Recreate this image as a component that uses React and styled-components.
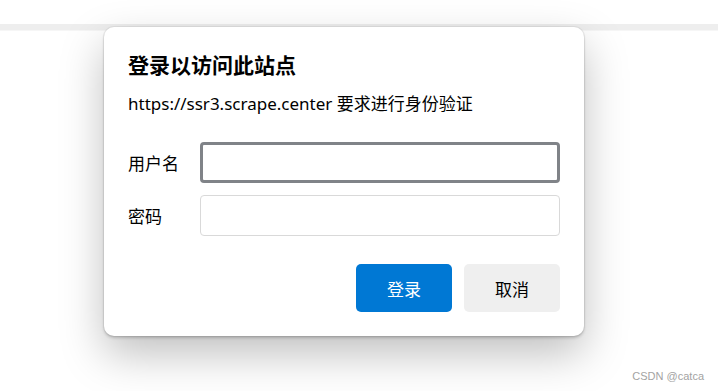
import { createGlobalStyle, styled } from 'styled-components';

const GlobalStyle = createGlobalStyle`
	html, body {
		margin: 0;
		padding: 0;
		background: #ffffff;
	}
	body {
		font-family: 'Noto Sans', 'Noto Sans CJK SC', sans-serif;
		color: #000;
	}
`;

const App = () => {
	return (
		<>
			<GlobalStyle />
			<Page>
				<TopStrip />
				<Watermark>CSDN @catca</Watermark>
			</Page>
			<Overlay>
				<Dialog>
					<Title>登录以访问此站点</Title>
					<Subtitle>https://ssr3.scrape.center 要求进行身份验证</Subtitle>
					<Form>
						<Label htmlFor='user'>用户名</Label>
						<Input id='user' $focused />
						<Label htmlFor='pass'>密码</Label>
						<Input id='pass' type='password' />
					</Form>
					<Actions>
						<Button $primary>登录</Button>
						<Button>取消</Button>
					</Actions>
				</Dialog>
			</Overlay>
		</>
	);
};

const Page = styled.div`
	position: relative;
	height: 391px;
	display: flex;
	flex-direction: column;
	justify-content: space-between;
`;

const TopStrip = styled.div`
	height: 30px;
	box-sizing: border-box;
	border-bottom: 6px solid #eeeeee;
	background: #ffffff;
	box-shadow: 0 1px 0 #f6f6f6;
`;

const Watermark = styled.div`
	align-self: flex-end;
	padding: 0 14px 9px 0;
	font-family: 'Liberation Sans', Arial, sans-serif;
	font-size: 11px;
	color: #a3a3a3;
`;

const Overlay = styled.div`
	position: absolute;
	inset: 0;
	padding: 27px 0 0 104px;
`;

const Dialog = styled.div`
	width: 480px;
	box-sizing: border-box;
	padding: 24px;
	background: #ffffff;
	border-radius: 10px;
	box-shadow: 0 0 0 1px rgba(0, 0, 0, 0.05), 0 2px 3px rgba(0, 0, 0, 0.18),
		0 18px 44px rgba(0, 0, 0, 0.25);
`;

const Title = styled.h1`
	margin: 0;
	font-size: 21px;
	line-height: 28px;
	font-weight: 700;
`;

const Subtitle = styled.p`
	margin: 13px 0 0;
	font-size: 17px;
	line-height: 24px;
`;

const Form = styled.div`
	margin-top: 26px;
	display: grid;
	grid-template-columns: 72px 1fr;
	grid-auto-rows: 41px;
	row-gap: 12px;
	align-items: center;
`;

const Label = styled.label`
	font-size: 17px;
`;

const Input = styled.input`
	height: 41px;
	width: 100%;
	box-sizing: border-box;
	background: #fff;
	border: ${(p) => (p.$focused ? '3px solid #808388' : '1px solid #d9d9d9')};
	border-radius: 4px;
	outline: none;
	font-size: 16px;
`;

const Actions = styled.div`
	margin-top: 28px;
	display: flex;
	justify-content: flex-end;
	gap: 12px;
`;

const Button = styled.button`
	width: 96px;
	height: 48px;
	border: none;
	border-radius: 5px;
	font-family: 'Noto Sans CJK SC', sans-serif;
	font-size: 17px;
	color: ${(p) => (p.$primary ? '#ffffff' : '#000000')};
	background: ${(p) => (p.$primary ? '#0078d4' : '#efefef')};
	cursor: pointer;
`;

export default App;
